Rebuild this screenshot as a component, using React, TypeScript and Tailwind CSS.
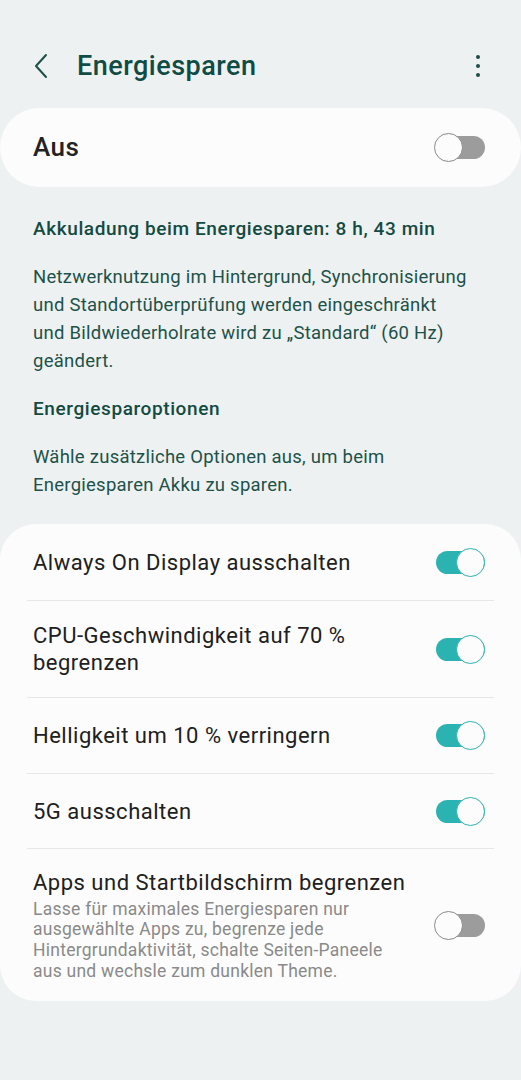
import React from "react";

function Toggle({ on }: { on: boolean }) {
  return (
    <div className="relative h-[29px] w-[51px] shrink-0">
      <div
        className={
          "absolute left-[2px] right-0 top-[3px] h-[23px] rounded-full " +
          (on ? "bg-[#2ab3b1]" : "bg-[#9c9c9c]")
        }
      />
      <div
        className={
          "absolute top-0 h-[29px] w-[29px] rounded-full bg-[#fcfcfc] border-[1.5px] " +
          (on ? "right-0 border-[#2ab3b1]" : "left-0 border-[#8a8a8a]")
        }
      />
    </div>
  );
}

function Row({
  title,
  desc,
  on,
  last,
  h,
}: {
  title: React.ReactNode;
  desc?: React.ReactNode;
  on: boolean;
  last?: boolean;
  h: string;
}) {
  return (
    <div className={"mx-[27px] flex items-center pl-[6px] pr-[9px] " + h + (last ? "" : " border-b border-[#e6e8e8]")}>
      <div className="flex-1 whitespace-nowrap">
        <div className="text-[22px] leading-[27px] tracking-[0.5px] text-[#202020]">{title}</div>
        {desc && (
          <div className="mt-[3px] text-[17.5px] leading-[20.7px] tracking-[0.25px] text-[#8a8a8a]">{desc}</div>
        )}
      </div>
      <Toggle on={on} />
    </div>
  );
}

export default function App() {
  return (
    <div
      className="min-h-[1080px] w-[521px] bg-[#eef1f2]"
      style={{ fontFamily: "Roboto, 'Noto Sans', sans-serif" }}
    >
      {/* Header */}
      <div className="flex h-[56px] items-center pt-[38px] box-content">
        <div className="ml-[33px] flex w-[44px] items-center">
          <svg width="16" height="26" viewBox="0 0 16 26" fill="none">
            <path d="M13 2 L3 13 L13 24" stroke="#1c4f48" strokeWidth="2" strokeLinecap="round" strokeLinejoin="round" />
          </svg>
        </div>
        <div className="flex-1 text-[27px] font-medium leading-[32px] tracking-[0.5px] text-[#0f4c45]">Energiesparen</div>
        <div className="mr-[41px] flex flex-col items-center gap-[5px]">
          <div className="h-[4px] w-[4px] rounded-full bg-[#1c4f48]" />
          <div className="h-[4px] w-[4px] rounded-full bg-[#1c4f48]" />
          <div className="h-[4px] w-[4px] rounded-full bg-[#1c4f48]" />
        </div>
      </div>

      {/* Main toggle card */}
      <div className="mt-[14px] flex h-[79px] items-center rounded-[40px] bg-[#fcfcfc] pl-[33px] pr-[36px]">
        <div className="flex-1 text-[26px] font-medium tracking-[0.5px] text-[#222222]">Aus</div>
        <Toggle on={false} />
      </div>

      {/* Info text */}
      <div className="px-[33px] pt-[28px] text-[18.5px] leading-[28px] tracking-[0.25px] text-[#1d5249]">
        <div className="text-[19px] font-medium tracking-[0.6px] text-[#134a42]">Akkuladung beim Energiesparen: 8 h, 43 min</div>
        <div className="mt-[20px] whitespace-nowrap">
          Netzwerknutzung im Hintergrund, Synchronisierung
          <br />
          und Standortüberprüfung werden eingeschränkt
          <br />
          und Bildwiederholrate wird zu „Standard“ (60 Hz)
          <br />
          geändert.
        </div>
        <div className="mt-[20px] text-[19px] font-medium tracking-[0.6px] text-[#134a42]">Energiesparoptionen</div>
        <div className="mt-[20px] whitespace-nowrap">
          Wähle zusätzliche Optionen aus, um beim
          <br />
          Energiesparen Akku zu sparen.
        </div>
      </div>

      {/* Options card */}
      <div className="mt-[25px] rounded-[36px] bg-[#fcfcfc]">
        <Row h="h-[77px]" title="Always On Display ausschalten" on />
        <Row
          h="h-[97px]"
          title={
            <>
              CPU-Geschwindigkeit auf 70 %
              <br />
              begrenzen
            </>
          }
          on
        />
        <Row h="h-[76px]" title="Helligkeit um 10 % verringern" on />
        <Row h="h-[75px]" title="5G ausschalten" on />
        <Row
          h="h-[152px]"
          last
          title="Apps und Startbildschirm begrenzen"
          desc={
            <>
              Lasse für maximales Energiesparen nur
              <br />
              ausgewählte Apps zu, begrenze jede
              <br />
              Hintergrundaktivität, schalte Seiten-Paneele
              <br />
              aus und wechsle zum dunklen Theme.
            </>
          }
          on={false}
        />
      </div>
    </div>
  );
}
